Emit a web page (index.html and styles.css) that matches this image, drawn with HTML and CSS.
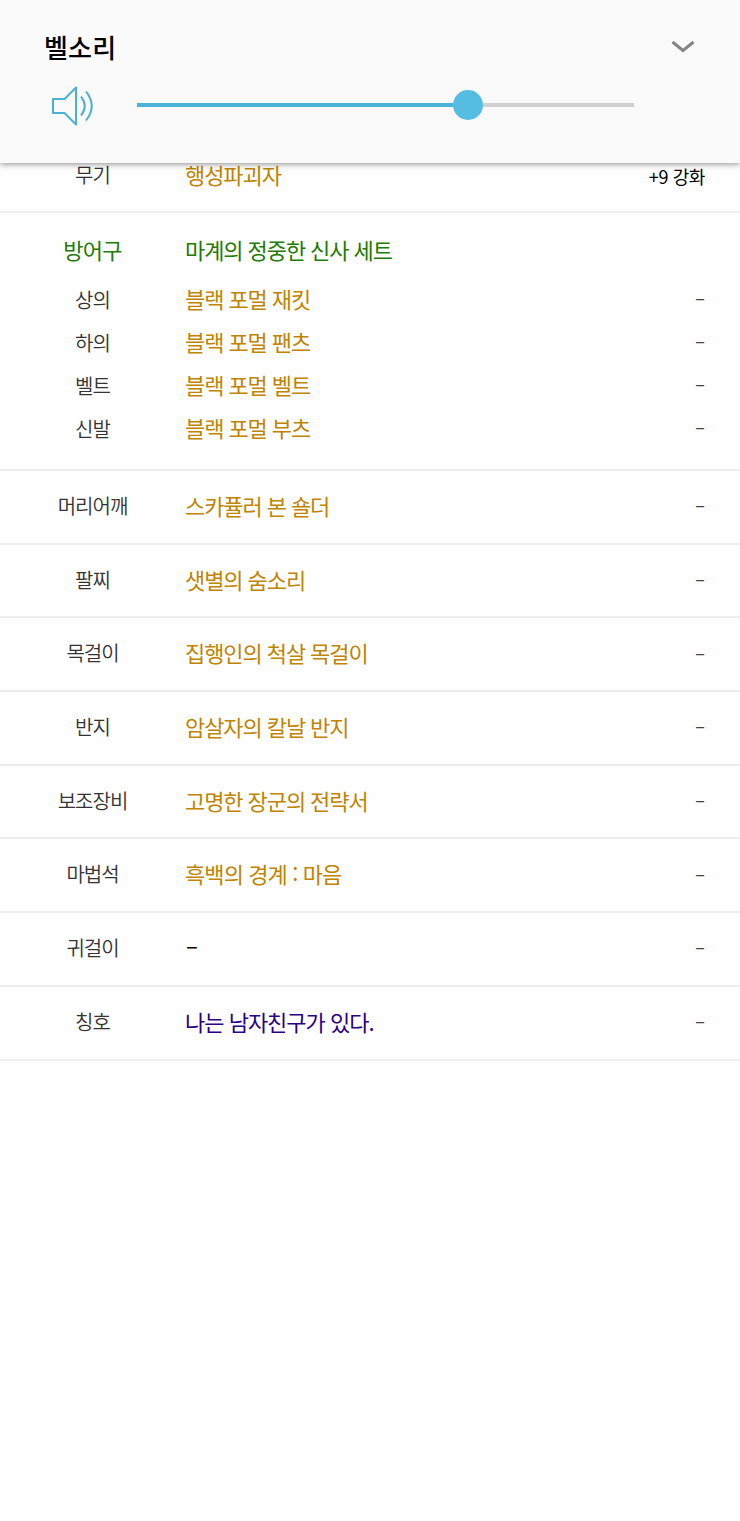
FILE: index.html
```html
<!DOCTYPE html>
<html lang="ko">
  <head>
    <meta charset="UTF-8" />
    <meta name="viewport" content="width=device-width, initial-scale=1.0" />
    <title>장비</title>
    <link rel="stylesheet" href="styles.css">
  </head>
  <body>
    <header class="volume-panel">
      <div class="volume-head">
        <h1 class="volume-title">벨소리</h1>
        <svg class="chevron" width="26" height="16" viewBox="0 0 26 16">
          <path d="M2.5 3 L13 11.5 L23.5 3" />
        </svg>
      </div>
      <div class="volume-control">
        <svg class="speaker" width="46" height="42" viewBox="0 0 46 42">
          <path d="M3 14 H14.5 L26 2.5 V39.5 L14.5 28 H3 Z" />
          <path d="M31 11.5 Q38.5 21 31 30.5" />
          <path d="M36 6.5 Q47.5 21 36 35.5" />
        </svg>
        <div class="slider">
          <div class="slider-fill"></div>
          <div class="slider-thumb"></div>
          <div class="slider-rest"></div>
        </div>
      </div>
    </header>

    <main class="equip-list">
      <section class="weapon row">
        <span class="label">무기</span>
        <span class="name epic">행성파괴자</span>
        <span class="upgrade">+9 강화</span>
      </section>

      <section class="armor">
        <div class="row armor-set">
          <span class="label">방어구</span>
          <span class="name">마계의 정중한 신사 세트</span>
        </div>
        <div class="row">
          <span class="label">상의</span>
          <span class="name epic">블랙 포멀 재킷</span>
          <span class="option">–</span>
        </div>
        <div class="row">
          <span class="label">하의</span>
          <span class="name epic">블랙 포멀 팬츠</span>
          <span class="option">–</span>
        </div>
        <div class="row">
          <span class="label">벨트</span>
          <span class="name epic">블랙 포멀 벨트</span>
          <span class="option">–</span>
        </div>
        <div class="row">
          <span class="label">신발</span>
          <span class="name epic">블랙 포멀 부츠</span>
          <span class="option">–</span>
        </div>
      </section>

      <section class="row item">
        <span class="label">머리어깨</span>
        <span class="name epic">스카퓰러 본 숄더</span>
        <span class="option">–</span>
      </section>
      <section class="row item">
        <span class="label">팔찌</span>
        <span class="name epic">샛별의 숨소리</span>
        <span class="option">–</span>
      </section>
      <section class="row item">
        <span class="label">목걸이</span>
        <span class="name epic">집행인의 척살 목걸이</span>
        <span class="option">–</span>
      </section>
      <section class="row item">
        <span class="label">반지</span>
        <span class="name epic">암살자의 칼날 반지</span>
        <span class="option">–</span>
      </section>
      <section class="row item">
        <span class="label">보조장비</span>
        <span class="name epic">고명한 장군의 전략서</span>
        <span class="option">–</span>
      </section>
      <section class="row item">
        <span class="label">마법석</span>
        <span class="name epic stone">흑백의 경계 : 마음</span>
        <span class="option">–</span>
      </section>
      <section class="row item">
        <span class="label">귀걸이</span>
        <span class="name empty">–</span>
        <span class="option">–</span>
      </section>
      <section class="row item">
        <span class="label">칭호</span>
        <span class="name title">나는 남자친구가 있다.</span>
        <span class="option">–</span>
      </section>
    </main>
  </body>
</html>
```

FILE: styles.css
```css
* {
  box-sizing: border-box;
}
body {
  margin: 0;
  min-height: 1521px;
  background: #fefefe;
  color: #000;
  font-family: "Noto Sans CJK KR", sans-serif;
}

/* volume panel */
.volume-panel {
  position: relative;
  height: 163px;
  padding: 27px 44px 0;
  background: #fafafa;
  box-shadow: 0 1px 6px rgba(0, 0, 0, 0.45);
}
.volume-head {
  display: flex;
  justify-content: space-between;
  height: 40px;
}
.volume-title {
  margin: 0;
  font-size: 26px;
  font-weight: 500;
  letter-spacing: 0.2px;
  line-height: 40px;
}
.chevron {
  margin-top: 12px;
  fill: none;
  stroke: #858585;
  stroke-width: 3;
}
.volume-control {
  display: flex;
  align-items: center;
  margin-top: 16px;
}
.speaker {
  margin: 2px 0 0 6px;
  fill: none;
  stroke: #4bb1d3;
  stroke-width: 2;
  stroke-linejoin: round;
}
.slider {
  display: flex;
  align-items: center;
  width: 497px;
  margin-left: 41px;
}
.slider-fill {
  width: 316px;
  height: 4px;
  background: #4bb4d6;
}
.slider-thumb {
  width: 30px;
  height: 30px;
  border-radius: 50%;
  background: #55bde2;
}
.slider-rest {
  flex: 1;
  height: 4px;
  background: #d0d0d0;
}

/* equipment */
.row {
  display: grid;
  grid-template-columns: 185px 1fr auto;
  align-items: center;
  height: 43px;
  padding-right: 35px;
}
.label {
  font-size: 20px;
  letter-spacing: -1px;
  line-height: 28px;
  text-align: center;
  font-weight: 350;
  color: #333;
}
.name {
  padding-bottom: 4px;
  font-size: 22px;
  letter-spacing: -1.08px;
  line-height: 30px;
}
.epic {
  color: #bf8400;
}
.stone {
  letter-spacing: -0.9px;
}
.title {
  letter-spacing: -1px;
  color: #2b0082;
}
.empty {
  padding: 0 0 10px 1px;
}
.upgrade {
  padding-top: 3px;
  font-size: 18px;
  letter-spacing: -0.4px;
}
.option {
  padding-bottom: 5px;
  font-size: 18px;
  line-height: 28px;
  color: #444;
}
/* slides under the volume panel */
.weapon {
  height: 54px;
  margin-top: -4px;
  padding-bottom: 22px;
  border-bottom: 2px solid #eee;
}
.weapon .name {
  padding-bottom: 1px;
}
.armor {
  height: 258px;
  padding-top: 14px;
  border-bottom: 2px solid #eee;
}
.armor-set {
  height: 51px;
}
.armor-set .label,
.armor-set .name {
  padding-bottom: 8px;
  font-weight: 400;
  font-size: 22px;
  color: #237a00;
}
.armor-set .label {
  letter-spacing: -0.8px;
}
.item {
  height: 73.7px;
  border-bottom: 2px solid #eee;
}
.item .label {
  padding-bottom: 2px;
}
```
